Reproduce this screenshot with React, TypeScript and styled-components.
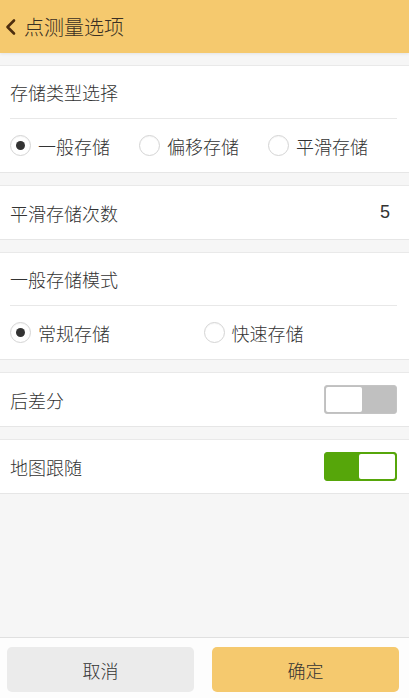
import React, { useState } from "react";
import styled, { createGlobalStyle } from "styled-components";

const Global = createGlobalStyle`
  html, body { margin: 0; padding: 0; }
  body {
    background: #f5f5f5;
    font-family: "Noto Sans CJK SC", "Noto Sans", sans-serif;
    font-weight: 300;
    color: #333;
  }
  * { box-sizing: border-box; }
`;

const Page = styled.div`
  height: 100vh;
  display: flex;
  flex-direction: column;
  background: #f6f6f6;
`;

const Header = styled.div`
  height: 53px;
  flex: none;
  background: #f5c96e;
  display: flex;
  align-items: center;
  padding-left: 4px;
  gap: 6px;
  box-shadow: 0 1px 3px rgba(0, 0, 0, 0.08);
`;

const HeaderTitle = styled.div`
  font-size: 20px;
  color: #3a3024;
  line-height: 1;
`;

const Main = styled.div`
  flex: 1;
  display: flex;
  flex-direction: column;
  gap: 12px;
  padding-top: 12px;
`;

const Card = styled.div`
  background: #fff;
  border-top: 1px solid #e9e9e9;
  border-bottom: 1px solid #e6e6e6;
`;

const Row = styled.div<{ $divider?: boolean }>`
  height: 53px;
  margin: 0 12px 0 10px;
  display: flex;
  align-items: center;
  justify-content: space-between;
  font-size: 18px;
  border-bottom: ${(p) => (p.$divider ? "1px solid #e8e8e8" : "none")};
`;

const Value = styled.span`
  font-family: "Liberation Sans", "Noto Sans", sans-serif;
  font-weight: 400;
  font-size: 18px;
  margin-right: 7px;
`;

const RadioGrid = styled.div<{ $cols: number }>`
  height: 53px;
  margin: 0 12px 0 10px;
  display: grid;
  grid-template-columns: repeat(${(p) => p.$cols}, 1fr);
  align-items: center;
`;

const RadioItem = styled.label`
  display: flex;
  align-items: center;
  gap: 7px;
  font-size: 18px;
  cursor: pointer;
`;

const Circle = styled.span<{ $on: boolean }>`
  width: 21px;
  height: 21px;
  border-radius: 50%;
  border: 1px solid #d4d4d4;
  background: #fff;
  display: flex;
  align-items: center;
  justify-content: center;
  box-shadow: inset 0 1px 1px rgba(0, 0, 0, 0.04);
  &::after {
    content: "";
    width: 9px;
    height: 9px;
    border-radius: 50%;
    background: #333;
    display: ${(p) => (p.$on ? "block" : "none")};
  }
`;

const Toggle = styled.div<{ $on: boolean }>`
  width: 73px;
  height: 29px;
  border-radius: 3px;
  border: 1px solid ${(p) => (p.$on ? "#56a60a" : "#c4c4c4")};
  background: ${(p) => (p.$on ? "#56a60a" : "#c0c0c0")};
  display: flex;
  justify-content: ${(p) => (p.$on ? "flex-end" : "flex-start")};
  padding: 1px;
  cursor: pointer;
`;

const Knob = styled.div`
  width: 36px;
  height: 100%;
  background: #fff;
  border-radius: 2px;
`;

const Footer = styled.div`
  flex: none;
  height: 61px;
  border-top: 1px solid #e0e0e0;
  background: #fdfdfd;
  display: grid;
  grid-template-columns: 1fr 1fr;
  gap: 18px;
  padding: 9px 10px 0 7px;
  align-items: start;
`;

const Button = styled.button<{ $primary?: boolean }>`
  height: 45px;
  border: none;
  border-radius: 5px;
  background: ${(p) => (p.$primary ? "#f5c96e" : "#ebebeb")};
  color: #333;
  font-family: "Noto Sans CJK SC", sans-serif;
  font-weight: 300;
  font-size: 18px;
`;

function Radio({ label, on, onClick }: { label: string; on: boolean; onClick: () => void }) {
  return (
    <RadioItem onClick={onClick}>
      <Circle $on={on} />
      {label}
    </RadioItem>
  );
}

export default function App() {
  const [type, setType] = useState(0);
  const [mode, setMode] = useState(0);
  const [rtk, setRtk] = useState(false);
  const [follow, setFollow] = useState(true);
  const types = ["一般存储", "偏移存储", "平滑存储"];
  const modes = ["常规存储", "快速存储"];
  return (
    <Page>
      <Global />
      <Header>
        <svg width="14" height="18" viewBox="0 0 14 18">
          <path d="M10 2.5 L3.5 9 L10 15.5" fill="none" stroke="#4e2e0e" strokeWidth="2.6" strokeLinecap="round" strokeLinejoin="round" />
        </svg>
        <HeaderTitle>点测量选项</HeaderTitle>
      </Header>
      <Main>
        <Card>
          <Row $divider>存储类型选择</Row>
          <RadioGrid $cols={3}>
            {types.map((t, i) => (
              <Radio key={t} label={t} on={type === i} onClick={() => setType(i)} />
            ))}
          </RadioGrid>
        </Card>
        <Card>
          <Row>
            平滑存储次数
            <Value>5</Value>
          </Row>
        </Card>
        <Card>
          <Row $divider>一般存储模式</Row>
          <RadioGrid $cols={2}>
            {modes.map((t, i) => (
              <Radio key={t} label={t} on={mode === i} onClick={() => setMode(i)} />
            ))}
          </RadioGrid>
        </Card>
        <Card>
          <Row>
            后差分
            <Toggle $on={rtk} onClick={() => setRtk(!rtk)}>
              <Knob />
            </Toggle>
          </Row>
        </Card>
        <Card>
          <Row>
            地图跟随
            <Toggle $on={follow} onClick={() => setFollow(!follow)}>
              <Knob />
            </Toggle>
          </Row>
        </Card>
      </Main>
      <Footer>
        <Button>取消</Button>
        <Button $primary>确定</Button>
      </Footer>
    </Page>
  );
}
